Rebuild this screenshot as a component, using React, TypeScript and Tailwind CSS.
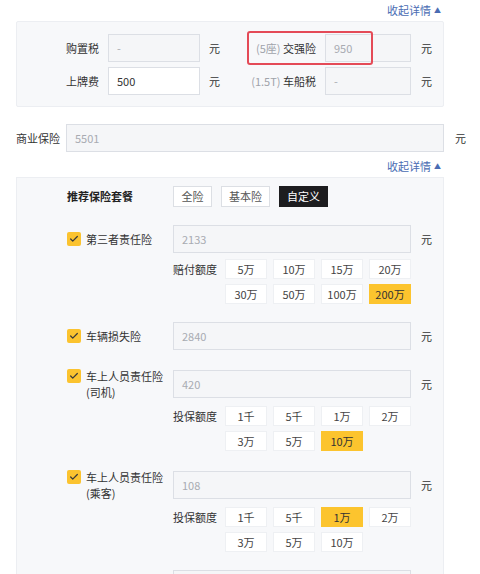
import { Check } from 'lucide-react';
import clsx from 'clsx';

const FONT = { fontFamily: '"Noto Sans CJK SC", "Noto Sans", sans-serif' };

function CollapseLink() {
  return (
    <div className="flex h-[21px] items-center justify-end pr-[39px] text-[11px] text-[#4a6cb3]">
      收起详情
      <span className="ml-[3px] text-[7px] leading-none">▲</span>
    </div>
  );
}

function BoxInput({ value, disabled = true, width }: { value: string; disabled?: boolean; width: string }) {
  return (
    <div
      className={clsx(
        'flex h-[28px] items-center border pl-[8px] text-[11px]',
        width,
        disabled ? 'border-[#dcdfe5] bg-[#f5f6f8] text-[#a8abb2]' : 'border-[#dcdfe5] bg-white text-[#333]'
      )}
    >
      {value}
    </div>
  );
}

type Option = { label: string; selected?: boolean };

function AmountPicker({ title, options }: { title: string; options: Option[] }) {
  return (
    <div className="mt-[6px] flex text-[11px]">
      <div className="w-[52px] pt-[2px] text-[#333]">{title}</div>
      <div className="grid grid-cols-[42px_42px_42px_42px] gap-x-[6px] gap-y-[5px]">
        {options.map((o) => (
          <div
            key={o.label}
            className={clsx(
              'flex h-[20px] items-center justify-center',
              o.selected ? 'bg-[#fcc42e] text-[#333]' : 'border border-[#eef0f3] bg-white text-[#444]'
            )}
          >
            {o.label}
          </div>
        ))}
      </div>
    </div>
  );
}

function InsuranceItem({
  name,
  sub,
  value,
  options,
  pickerTitle,
}: {
  name: string;
  sub?: string;
  value: string;
  options?: Option[];
  pickerTitle?: string;
}) {
  return (
    <div>
      <div className="flex items-center">
        <div className="flex w-[106px] items-start">
          <div className="mt-[1px] flex h-[14px] w-[14px] items-center justify-center rounded-[2px] bg-[#fbc32f]">
            <Check size={10} strokeWidth={3} className="text-[#3a3a3a]" />
          </div>
          <div className="ml-[5px] text-[11px] leading-[16px] text-[#333]">
            <div>{name}</div>
            {sub && <div>{sub}</div>}
          </div>
        </div>
        <BoxInput value={value} width="w-[238px]" />
        <span className="ml-[10px] text-[11px] text-[#333]">元</span>
      </div>
      {options && (
        <div className="pl-[106px]">
          <AmountPicker title={pickerTitle ?? ''} options={options} />
        </div>
      )}
    </div>
  );
}

const third: Option[] = [
  { label: '5万' },
  { label: '10万' },
  { label: '15万' },
  { label: '20万' },
  { label: '30万' },
  { label: '50万' },
  { label: '100万' },
  { label: '200万', selected: true },
];

const driver: Option[] = [
  { label: '1千' },
  { label: '5千' },
  { label: '1万' },
  { label: '2万' },
  { label: '3万' },
  { label: '5万' },
  { label: '10万', selected: true },
];

const passenger: Option[] = [
  { label: '1千' },
  { label: '5千' },
  { label: '1万', selected: true },
  { label: '2万' },
  { label: '3万' },
  { label: '5万' },
  { label: '10万' },
];

export default function App() {
  return (
    <div className="h-[574px] w-[480px] overflow-hidden bg-white text-[11px] text-[#333]" style={FONT}>
      <CollapseLink />

      {/* compulsory fees */}
      <div className="relative mx-4 w-[428px] rounded-[2px] border border-[#eceef2] bg-[#f7f8fa] pt-[12px] pb-[11px]">
        <div className="flex flex-col gap-[5px]">
          <div className="flex items-center">
            <div className="w-[82px] text-right">购置税</div>
            <div className="ml-[9px]">
              <BoxInput value="-" width="w-[92px]" />
            </div>
            <span className="ml-[9px]">元</span>
            <div className="w-[96px] text-right">
              <span className="text-[#a0a3aa]">(5座)</span> 交强险
            </div>
            <div className="ml-[9px]">
              <BoxInput value="950" width="w-[86px]" />
            </div>
            <span className="ml-[10px]">元</span>
          </div>
          <div className="flex items-center">
            <div className="w-[82px] text-right">上牌费</div>
            <div className="ml-[9px]">
              <BoxInput value="500" disabled={false} width="w-[92px]" />
            </div>
            <span className="ml-[9px]">元</span>
            <div className="w-[96px] text-right">
              <span className="text-[#a0a3aa]">(1.5T)</span> 车船税
            </div>
            <div className="ml-[9px]">
              <BoxInput value="-" width="w-[86px]" />
            </div>
            <span className="ml-[10px]">元</span>
          </div>
        </div>
        {/* highlight frame */}
        <div className="absolute top-[9px] left-[230px] h-[34px] w-[126px] rounded-[3px] border-2 border-[#e44a57]" />
      </div>

      {/* commercial insurance */}
      <div className="mt-[17px] flex items-center pl-4">
        <div className="w-[50px]">商业保险</div>
        <BoxInput value="5501" width="w-[378px]" />
        <span className="ml-[11px]">元</span>
      </div>

      <div className="mt-[4px]">
        <CollapseLink />
      </div>

      <div className="mx-4 w-[428px] border border-[#eceef2] bg-[#f7f8fa] pt-[8px] pb-6 pl-[50px]">
        <div className="flex items-center">
          <div className="w-[106px] font-bold text-[#222]">推荐保险套餐</div>
          <div className="flex gap-[9px]">
            <div className="flex h-[21px] w-[39px] items-center justify-center border border-[#dcdfe4] bg-white text-[#555]">
              全险
            </div>
            <div className="flex h-[21px] w-[49px] items-center justify-center border border-[#dcdfe4] bg-white text-[#555]">
              基本险
            </div>
            <div className="flex h-[21px] w-[49px] items-center justify-center bg-[#1d1d1f] text-white">
              自定义
            </div>
          </div>
        </div>

        <div className="mt-[18px] flex flex-col gap-[18px]">
          <InsuranceItem name="第三者责任险" value="2133" pickerTitle="赔付额度" options={third} />
          <InsuranceItem name="车辆损失险" value="2840" />
          <InsuranceItem name="车上人员责任险" sub="(司机)" value="420" pickerTitle="投保额度" options={driver} />
          <InsuranceItem name="车上人员责任险" sub="(乘客)" value="108" pickerTitle="投保额度" options={passenger} />
          <InsuranceItem name="全车盗抢险" value="" />
        </div>
      </div>
    </div>
  );
}
